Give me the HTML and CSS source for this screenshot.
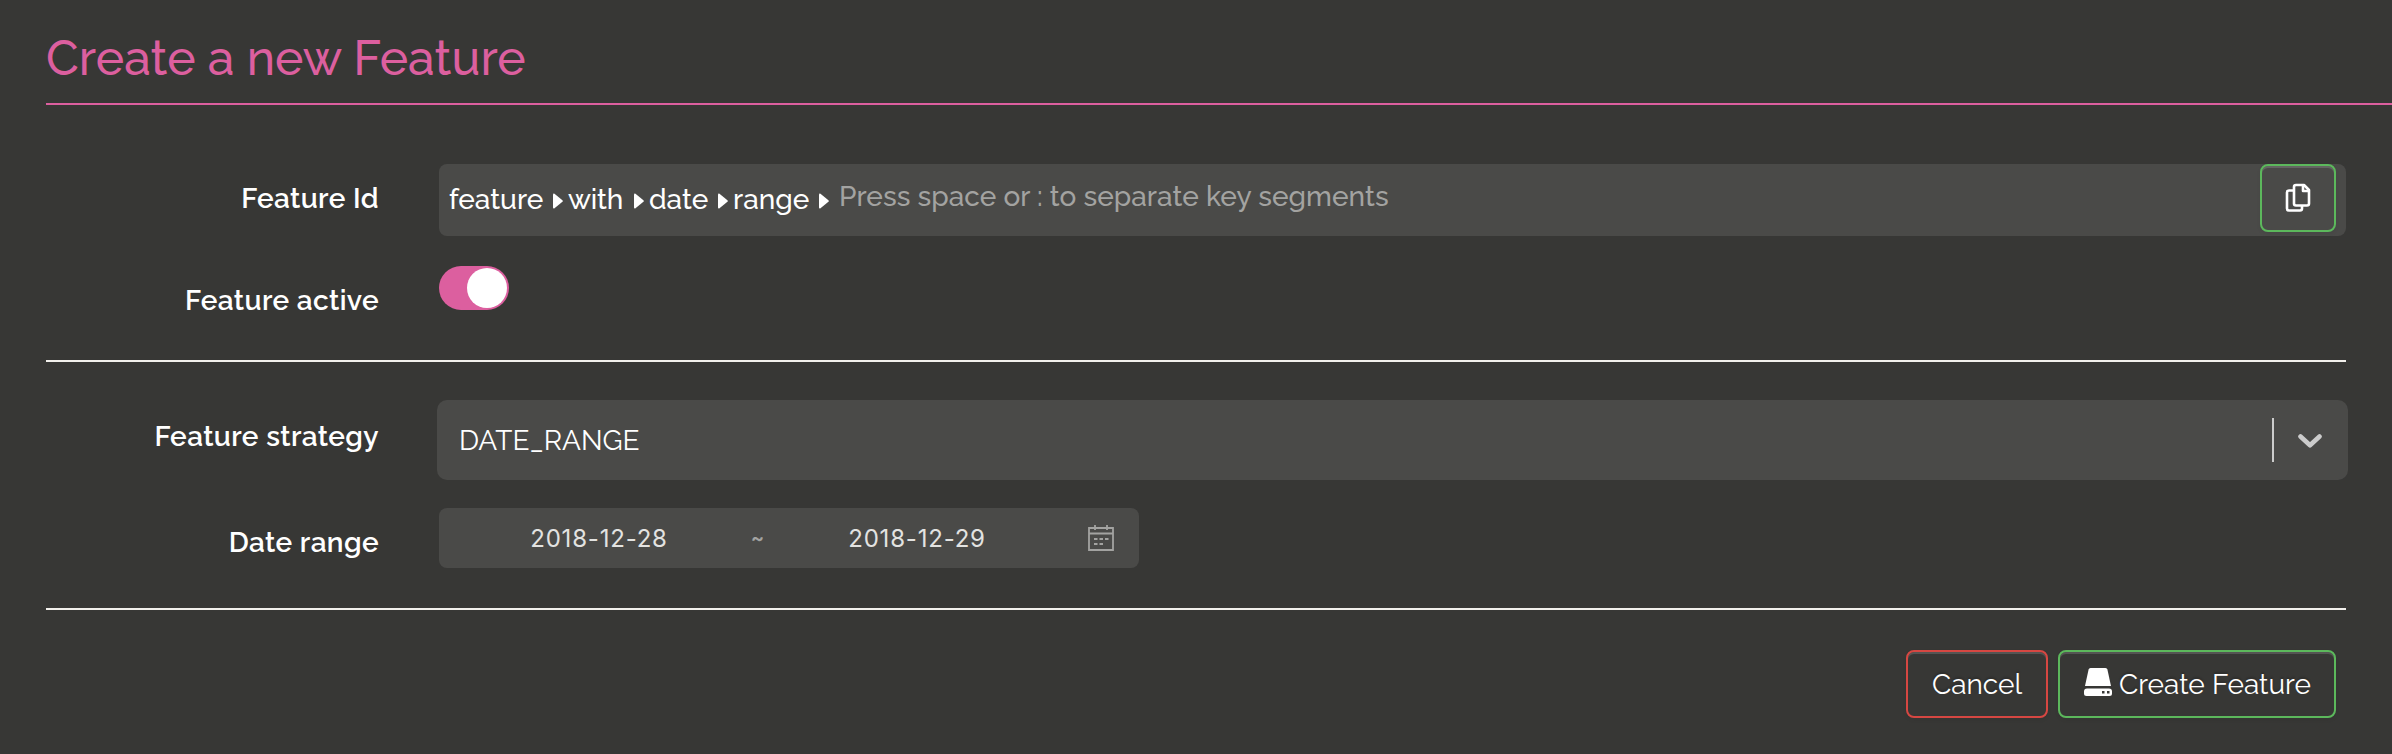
FILE: index.html
```html
<!DOCTYPE html>
<html lang="en">
<head>
<meta charset="utf-8">
<title>Create a new Feature</title>
<link rel="stylesheet" href="styles.css">
</head>
<body>
<h1 class="title">Create a new Feature</h1>
<form class="form">
  <div class="row row-id">
    <label class="label">Feature Id</label>
    <div class="field">
      <div class="segments">
        <span class="segment s1">feature</span><svg class="caret" viewBox="0 0 10 16"><path d="M0 1.4Q.2 0 1.5.7L9.4 7.2Q10.3 8 9.4 8.8L1.5 15.3Q.2 16 0 14.6Z"/></svg>
        <span class="segment s2">with</span><svg class="caret" viewBox="0 0 10 16"><path d="M0 1.4Q.2 0 1.5.7L9.4 7.2Q10.3 8 9.4 8.8L1.5 15.3Q.2 16 0 14.6Z"/></svg>
        <span class="segment s3">date</span><svg class="caret" viewBox="0 0 10 16"><path d="M0 1.4Q.2 0 1.5.7L9.4 7.2Q10.3 8 9.4 8.8L1.5 15.3Q.2 16 0 14.6Z"/></svg>
        <span class="segment s4">range</span><svg class="caret" viewBox="0 0 10 16"><path d="M0 1.4Q.2 0 1.5.7L9.4 7.2Q10.3 8 9.4 8.8L1.5 15.3Q.2 16 0 14.6Z"/></svg>
      </div>
      <span class="placeholder">Press space or : to separate key segments</span>
      <button type="button" class="btn btn-green btn-copy" aria-label="Copy">
        <svg class="copy-icon" viewBox="0 0 26 30"><path d="M8.5 7.5H4A2 2 0 0 0 2 9.500V25.500A2 2 0 0 0 4 27.500H15A2 2 0 0 0 17 25.500V23"/><path d="M11 2H19L24 7V20.500A2 2 0 0 1 22 22.500H11A2 2 0 0 1 9 20.500V4A2 2 0 0 1 11 2Z"/><path d="M18 2V8H24"/></svg>
      </button>
    </div>
  </div>
  <div class="row row-active">
    <label class="label">Feature active</label>
    <div class="toggle"><div class="knob"></div></div>
  </div>
  <div class="rule"></div>
  <div class="row row-strategy">
    <label class="label label-strategy">Feature strategy</label>
    <div class="select">
      <span class="select-value">DATE_RANGE</span>
      <span class="select-divider"></span>
      <svg class="chevron" viewBox="0 0 24 14"><path d="M2.500 2.500 12 11.300 21.500 2.500"/></svg>
    </div>
  </div>
  <div class="row row-range">
    <label class="label">Date range</label>
    <div class="range">
      <span class="date">2018-12-28</span>
      <span class="tilde">~</span>
      <span class="date date-end">2018-12-29</span>
      <svg class="calendar" viewBox="0 0 26 26"><path d="M1 3H25V25H1ZM1 8.500H25M7 0V5M19 0V5"/><path d="M6 14h3.500M11.500 14h3.500M17 14h3.500M6 19h3.500M11.500 19h3.500"/></svg>
    </div>
  </div>
  <div class="rule"></div>
  <div class="actions">
    <button type="button" class="btn btn-red btn-cancel"><span class="btn-text">Cancel</span></button>
    <button type="button" class="btn btn-green btn-create">
      <svg class="drive-icon" viewBox="0 0 28 28"><path d="M6.500 0H21.500Q23 0 23.400 1.500L27 18H1L4.600 1.500Q5 0 6.500 0Z"/><path fill-rule="evenodd" d="M3 20.500H25A3 3 0 0 1 28 23.500V25.500A2.500 2.500 0 0 1 25.500 28H2.500A2.500 2.500 0 0 1 0 25.500V23.500A3 3 0 0 1 3 20.500ZM18 23V25.500H20.500V23ZM23 23V25.500H25.500V23Z"/></svg>
      <span class="btn-text">Create Feature</span>
    </button>
  </div>
</form>
</body>
</html>
```
FILE: styles.css
```css
* { box-sizing: border-box; }
body {
  margin: 0;
  height: 754px;
  overflow: hidden;
  background: #373735;
  color: #fff;
  font-family: Raleway, Lato, "Open Sans", sans-serif;
  font-size: 28px;
  line-height: 34px;
}
svg { display: block; flex: none; }
.title {
  margin: 0 0 0 46px;
  padding: 30px 0 17px;
  border-bottom: 2px solid #dc5f9f;
  color: #dc5f9f;
  font-size: 48px;
  font-weight: 500;
  line-height: 56px;
  letter-spacing: .06px;
}
.form { padding: 59px 46px 0; }
.row {
  display: grid;
  grid-template-columns: 333px 1907px;
  column-gap: 60px;
  align-items: start;
}
.row-active { margin-top: 30px; height: 44px; }
.row-strategy { margin-top: 38px; }
.row-range { margin-top: 28px; }
.label { padding-top: 18px; text-align: right; font-weight: 600; letter-spacing: .38px; }
.label-strategy { padding-top: 20px; }
.rule { height: 2px; background: #f2f0ec; }
.row-active + .rule { margin-top: 50px; }
.row-range + .rule { margin-top: 40px; }

.field {
  display: flex;
  height: 72px;
  padding: 0 10px;
  border-radius: 8px;
  background: #4a4a48;
  font-weight: 500;
}
.segments { display: flex; padding-top: 19px; }
.segment { flex: none; }
.s1 { width: 104px; }
.s2 { width: 66px; letter-spacing: -.2px; }
.s3 { width: 69px; }
.s4 { width: 86px; }
.caret { width: 10px; height: 16px; margin: 10px 5px 0 0; fill: #fff; }
.placeholder { padding: 16px 0 0 5px; color: #a3a3a1; letter-spacing: .05px; white-space: nowrap; }

.btn {
  display: flex;
  align-items: center;
  height: 68px;
  padding: 0;
  border: 2px solid;
  border-radius: 8px;
  background: transparent;
  color: #fff;
  font: inherit;
  line-height: 34px;
  text-shadow: 0 -2px 2px rgba(0, 0, 0, .2);
  box-shadow: inset 0 2px 0 rgba(255, 255, 255, .15), 0 2px 4px rgba(0, 0, 0, .05);
}
.btn-text { padding-top: 1px; font-weight: 400; }
.btn-green { border-color: #5cb85c; }
.btn-red { border-color: #d64742; }
.btn-copy { width: 76px; margin-left: auto; justify-content: center; }
.copy-icon { width: 26px; height: 30px; fill: none; stroke: #fff; stroke-width: 2.6; stroke-linejoin: round; }

.toggle { width: 70px; height: 44px; padding: 2px; border-radius: 22px; background: #dc5f9f; }
.knob { width: 40px; height: 40px; margin-left: auto; border-radius: 50%; background: #fff; }

.select {
  display: flex;
  align-items: center;
  width: 1911px;
  height: 80px;
  margin-left: -2px;
  padding: 0 26px 0 22px;
  border-radius: 10px;
  background: #4a4a48;
}
.select-value { padding-top: 1px; }
.select-divider { width: 2px; height: 44px; margin: 0 24px 0 auto; background: #ccc; }
.chevron { width: 24px; height: 14px; margin-top: 2px; fill: none; stroke: #ccc; stroke-width: 4.6; stroke-linecap: round; stroke-linejoin: round; }

.range {
  display: flex;
  align-items: center;
  width: 700px;
  height: 60px;
  padding: 0 25px 0 14px;
  border-radius: 8px;
  background: #4a4a48;
  color: #e3e3e1;
  font-family: Inter, sans-serif;
  font-size: 24px;
}
.date { width: 292px; padding-top: 1px; text-align: center; letter-spacing: .8px; }
.date-end { margin-left: 1px; }
.tilde { width: 25px; text-align: center; color: #a3a3a1; font-size: 20px; font-weight: 600; }
.calendar { width: 26px; height: 26px; margin-left: auto; fill: none; stroke: #a3a3a1; stroke-width: 1.8; }

.actions { display: flex; justify-content: flex-end; gap: 10px; padding: 40px 10px 0 0; }
.btn-cancel { width: 142px; padding-left: 24px; }
.btn-create { width: 278px; padding-left: 24px; gap: 7px; }
.drive-icon { width: 28px; height: 28px; margin-bottom: 4px; fill: #fff; }
```
